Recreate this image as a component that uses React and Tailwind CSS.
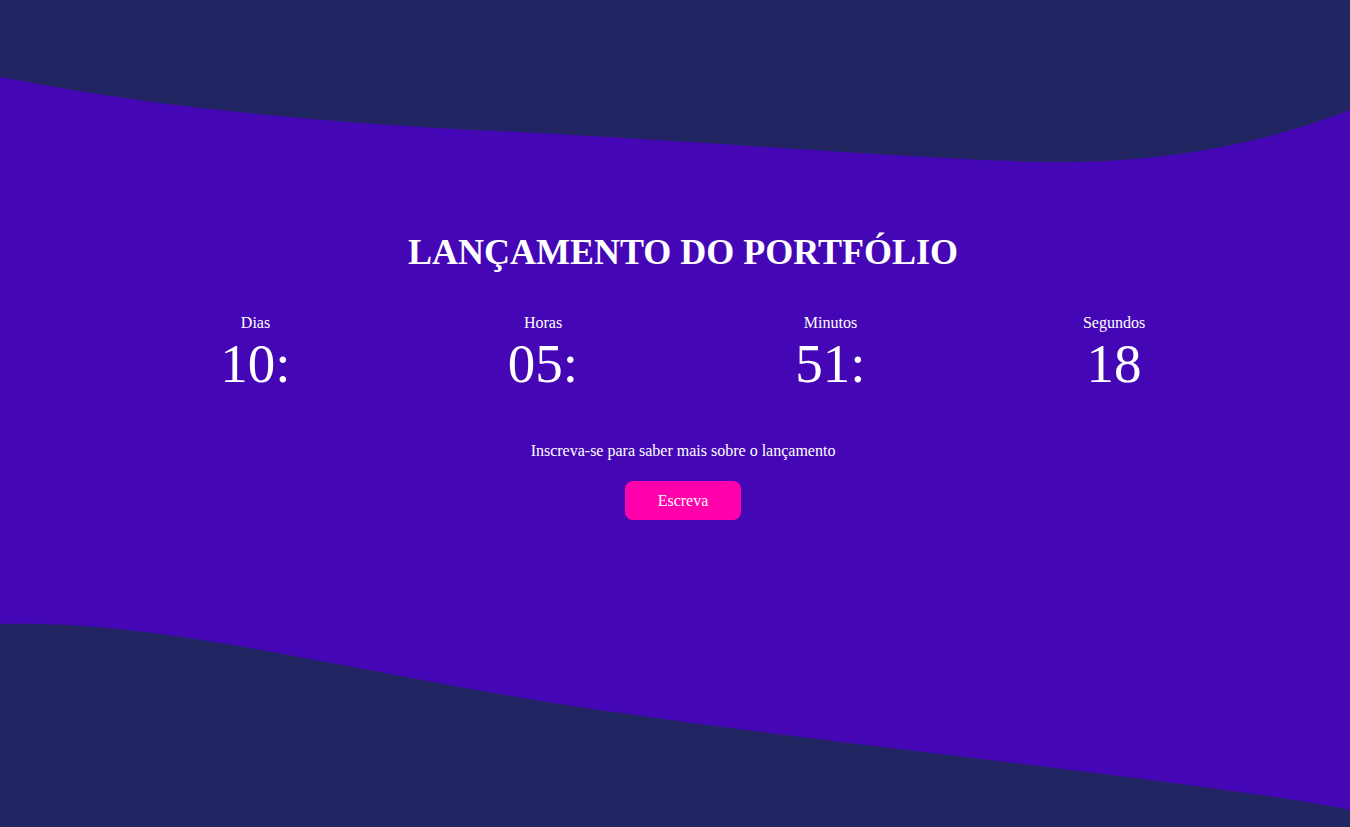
import React from 'react';

const units = [
    { label: 'Dias', value: '10:' },
    { label: 'Horas', value: '05:' },
    { label: 'Minutos', value: '51:' },
    { label: 'Segundos', value: '18' },
];

export default function App() {
    return (
        <div
            className="relative min-h-screen w-full overflow-hidden bg-[#4507b6] text-white"
            style={{ fontFamily: '"Liberation Serif", "Times New Roman", serif' }}
        >
            {/* background waves */}
            <svg
                className="absolute inset-0 h-full w-full"
                viewBox="0 0 1350 827"
                preserveAspectRatio="none"
            >
                <path
                    fill="#212562"
                    d="M0,77 C120,100 260,120 517,132 C700,141 900,158 1040,162 C1160,164 1260,145 1350,110 V0 H0 Z"
                />
                <path
                    fill="#212562"
                    d="M0,624 C150,620 300,660 517,697 C700,728 1000,760 1150,780 C1250,793 1300,800 1350,810 V827 H0 Z"
                />
            </svg>

            <div className="relative flex flex-col items-center pt-[232px] pl-4">
                <h1 className="text-[36px] leading-[41px] font-bold">LANÇAMENTO DO PORTFÓLIO</h1>
            </div>

            <div className="relative mt-[41px] ml-[112px] grid w-[1142px] grid-cols-[287px_288px_287px_280px]">
                {units.map((u) => (
                    <div key={u.label} className="flex flex-col items-center">
                        <span className="text-[16px] leading-[18px]">{u.label}</span>
                        <span className="text-[55px] leading-[64px]">{u.value}</span>
                    </div>
                ))}
            </div>

            <div className="relative mt-[46px] flex flex-col items-center pl-4">
                <p className="text-[16px] leading-[18px]">Inscreva-se para saber mais sobre o lançamento</p>
                <button className="mt-[21px] flex h-[39px] w-[116px] items-center justify-center rounded-lg bg-[#ff00aa] text-[16px] text-white">
                    Escreva
                </button>
            </div>
        </div>
    );
}
